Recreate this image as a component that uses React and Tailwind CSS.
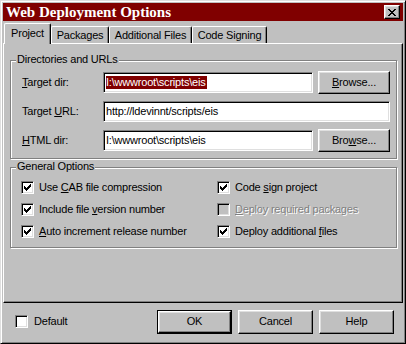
const raised =
  'border border-t-white border-l-white border-r-black border-b-black shadow-[inset_-1px_-1px_#808080,inset_1px_1px_#dfdfdf]'
const sunken =
  'border border-t-[#808080] border-l-[#808080] border-r-white border-b-white shadow-[inset_1px_1px_#000,inset_-1px_-1px_#dfdfdf]'
const etched = 'border border-[#808080] shadow-[inset_1px_1px_#fff,1px_1px_#fff]'

function CheckBox({ checked, disabled }) {
  return (
    <span
      className={`w-[13px] h-[13px] shrink-0 flex items-center justify-center ${sunken} ${
        disabled ? 'bg-[#c0c0c0]' : 'bg-white'
      }`}
    >
      {checked && (
        <svg width="7" height="7" viewBox="0 0 7 7" shapeRendering="crispEdges">
          <path
            d="M0 2h1v3H0zM1 3h1v3H1zM2 4h1v3H2zM3 3h1v3H3zM4 2h1v3H4zM5 1h1v3H5zM6 0h1v3H6z"
            fill="#000"
          />
        </svg>
      )}
    </span>
  )
}

function Option({ checked, disabled, children }) {
  return (
    <div className="h-[22px] flex items-center gap-[5px]">
      <CheckBox checked={checked} disabled={disabled} />
      <span
        className={
          disabled ? 'text-[#808080] [text-shadow:1px_1px_0_#fff] whitespace-nowrap' : 'whitespace-nowrap'
        }
      >
        {children}
      </span>
    </div>
  )
}

function Button({ children, className = '' }) {
  return (
    <div className={`h-[23px] flex items-center justify-center bg-[#c0c0c0] ${raised} ${className}`}>
      {children}
    </div>
  )
}

function Field({ children, className = '' }) {
  return (
    <div
      className={`h-[21px] bg-white flex items-center pl-[2px] overflow-hidden whitespace-nowrap ${sunken} ${className}`}
    >
      {children}
    </div>
  )
}

function Group({ title, className = '', children }) {
  return (
    <div className={`relative ${etched} ${className}`}>
      <span className="absolute top-[-8px] left-[5px] px-[1px] bg-[#c0c0c0] whitespace-nowrap">{title}</span>
      {children}
    </div>
  )
}

function Tab({ label, active, width }) {
  if (active) {
    return (
      <div
        className={`${width} h-[21px] -mb-[1px] relative z-10 bg-[#c0c0c0] border-t border-l border-r border-t-white border-l-white border-r-black rounded-t-[2px] shadow-[inset_-1px_0_#808080] flex justify-center pt-[3px] whitespace-nowrap`}
      >
        {label}
      </div>
    )
  }
  return (
    <div
      className={`${width} h-[17px] bg-[#c0c0c0] border-t border-l border-r border-t-white border-l-white border-r-black rounded-t-[2px] shadow-[inset_-1px_0_#808080] flex justify-center pt-[2px] whitespace-nowrap`}
    >
      {label}
    </div>
  )
}

export default function App() {
  return (
    <div className="w-[406px] h-[344px] bg-[#c0c0c0] text-black text-[11px] leading-[13px] tracking-[-0.2px] font-['Liberation_Sans',Arial,sans-serif] border border-t-[#dfdfdf] border-l-[#dfdfdf] border-r-black border-b-black shadow-[inset_1px_1px_#fff,inset_-1px_-1px_#808080] p-[2px] flex flex-col overflow-hidden">
      {/* title bar */}
      <div className="h-[18px] shrink-0 bg-[#800000] flex items-center justify-between pl-[3px] pr-[3px]">
        <span className="text-white font-bold text-[15px] leading-[18px] tracking-normal font-['Liberation_Serif',serif] whitespace-nowrap">
          Web Deployment Options
        </span>
        <div className={`w-[16px] h-[14px] bg-[#c0c0c0] flex items-center justify-center ${raised}`}>
          <svg width="8" height="7" viewBox="0 0 8 7" shapeRendering="crispEdges">
            <path
              d="M0 0h2v1H0zM6 0h2v1H6zM1 1h2v1H1zM5 1h2v1H5zM2 2h4v1H2zM3 3h2v1H3zM2 4h4v1H2zM1 5h2v1H1zM5 5h2v1H5zM0 6h2v1H0zM6 6h2v1H6z"
              fill="#000"
            />
          </svg>
        </div>
      </div>

      {/* tabs */}
      <div className="mt-[2px] h-[20px] shrink-0 flex items-end pl-[1px]">
        <Tab label="Project" active width="w-[47px]" />
        <Tab label="Packages" width="w-[58px]" />
        <Tab label="Additional Files" width="w-[83px]" />
        <Tab label="Code Signing" width="w-[75px]" />
      </div>

      {/* tab page */}
      <div className="h-[260px] shrink-0 border border-t-white border-l-white border-r-black border-b-black shadow-[inset_-1px_-1px_#808080] pt-[16px] pl-[6px] pr-[5px] flex flex-col">
        <Group title="Directories and URLs" className="pt-[10px] pl-[11px] pb-[6px]">
          <div className="grid grid-cols-[76px_210px_72px] gap-x-[5px] gap-y-[6px]">
            <div className="h-[23px] flex items-center">
              <span>
                <u>T</u>arget dir:
              </span>
            </div>
            <div className="flex items-center">
              <Field className="w-full">
                <span className="bg-[#800000] text-white pr-[1px]">I:\wwwroot\scripts\eis</span>
              </Field>
            </div>
            <Button>
              <span>
                <u>B</u>rowse...
              </span>
            </Button>

            <div className="h-[23px] flex items-center">
              <span>
                Target <u>U</u>RL:
              </span>
            </div>
            <div className="col-span-2 flex items-center">
              <Field className="w-full">http://ldevinnt/scripts/eis</Field>
            </div>

            <div className="h-[23px] flex items-center">
              <span>
                <u>H</u>TML dir:
              </span>
            </div>
            <div className="flex items-center">
              <Field className="w-full">I:\wwwroot\scripts\eis</Field>
            </div>
            <Button>
              <span>
                Bro<u>w</u>se...
              </span>
            </Button>
          </div>
        </Group>

        <Group title="General Options" className="mt-[8px] pt-[8px] pl-[10px] pb-[5px]">
          <div className="grid grid-cols-[196px_1fr]">
            <Option checked>
              Use <u>C</u>AB file compression
            </Option>
            <Option checked>
              Code <u>s</u>ign project
            </Option>
            <Option checked>
              Include file <u>v</u>ersion number
            </Option>
            <Option disabled>
              <u>D</u>eploy required packages
            </Option>
            <Option checked>
              <u>A</u>uto increment release number
            </Option>
            <Option checked>
              Deploy additional <u>f</u>iles
            </Option>
          </div>
        </Group>
      </div>

      {/* footer */}
      <div className="flex-1 flex items-center pl-[12px] pr-[9px] pb-[1px]">
        <div className="flex items-center gap-[6px]">
          <CheckBox />
          <span>Default</span>
        </div>
        <div className="ml-auto flex items-center gap-[6px]">
          <div className="w-[75px] h-[24px] border border-black flex">
            <Button className="flex-1 h-full">OK</Button>
          </div>
          <Button className="w-[75px] h-[24px]">Cancel</Button>
          <Button className="w-[75px] h-[24px]">Help</Button>
        </div>
      </div>
    </div>
  )
}
